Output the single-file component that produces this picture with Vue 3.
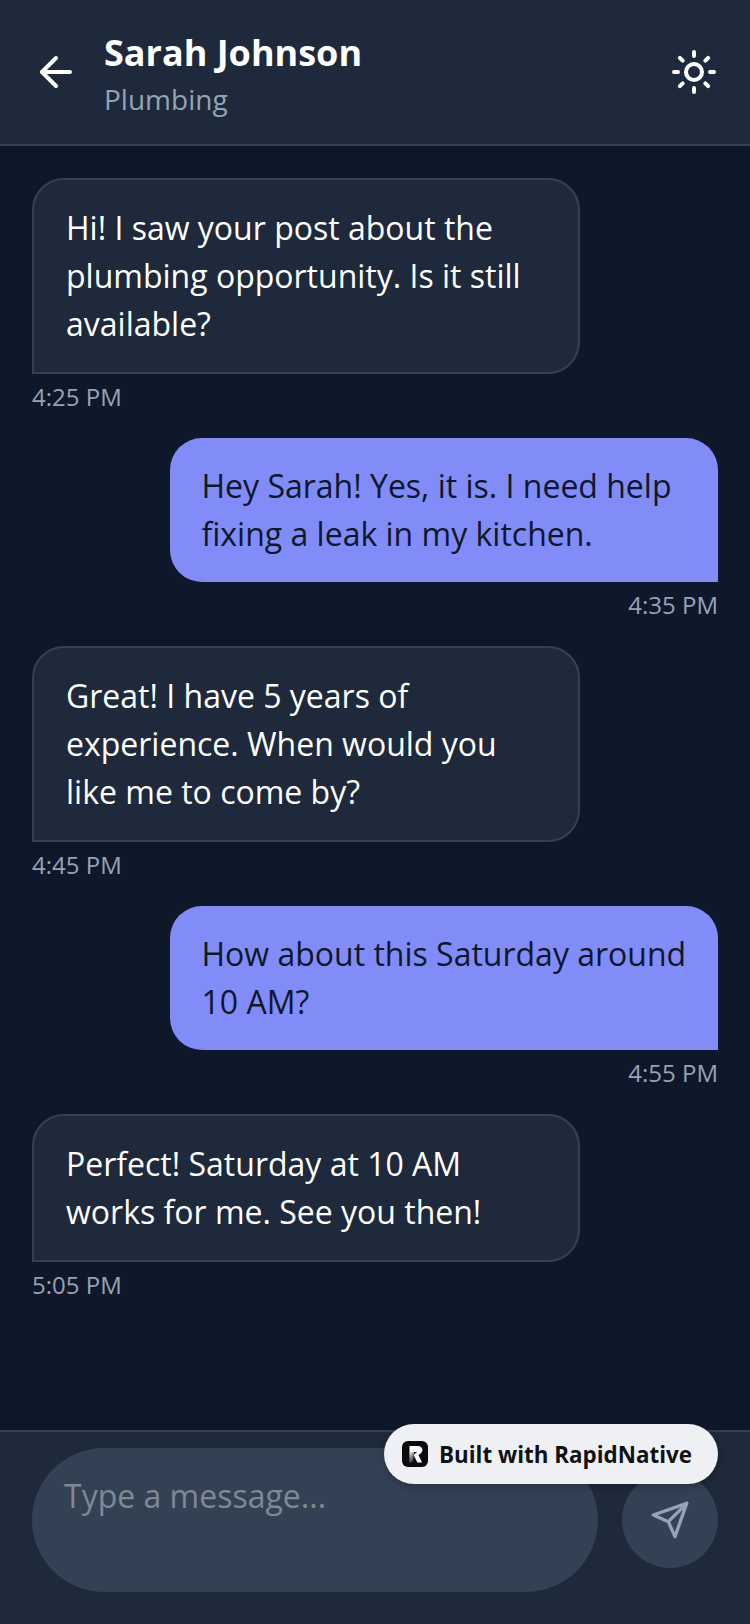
<template>
  <div class="chat">
    <header class="topbar">
      <svg class="icon back" viewBox="0 0 24 24" fill="none" stroke="#fff" stroke-width="2" stroke-linecap="round" stroke-linejoin="round">
        <path d="m12 19-7-7 7-7" />
        <path d="M19 12H5" />
      </svg>
      <div class="who">
        <div class="name">Sarah Johnson</div>
        <div class="trade">Plumbing</div>
      </div>
      <svg class="icon" viewBox="0 0 24 24" fill="none" stroke="#fff" stroke-width="2" stroke-linecap="round" stroke-linejoin="round">
        <circle cx="12" cy="12" r="4" />
        <path d="M12 2v2M12 20v2M4.93 4.93l1.41 1.41M17.66 17.66l1.41 1.41M2 12h2M20 12h2M6.34 17.66l-1.41 1.41M19.07 4.93l-1.41 1.41" />
      </svg>
    </header>

    <main class="messages">
      <div v-for="m in messages" :key="m.time" class="msg" :class="m.mine ? 'mine' : 'theirs'">
        <div class="bubble">{{ m.text }}</div>
        <div class="time">{{ m.time }}</div>
      </div>
    </main>

    <footer class="composer">
      <div class="input">Type a message...</div>
      <div class="send">
        <svg class="send-icon" viewBox="0 0 24 24" fill="none" stroke="#94a3b8" stroke-width="2" stroke-linecap="round" stroke-linejoin="round">
          <path d="m22 2-7 20-4-9-9-4Z" />
          <path d="M22 2 11 13" />
        </svg>
      </div>
    </footer>

    <div class="badge">
      <svg class="logo" viewBox="0 0 26 26">
        <defs>
          <linearGradient id="stem" x1="0" y1="0" x2="0.6" y2="1">
            <stop offset="0" stop-color="#fff" />
            <stop offset="1" stop-color="#1c1c1e" />
          </linearGradient>
        </defs>
        <rect width="26" height="26" rx="6" fill="#0b0b0d" />
        <path d="M7.500 5h9a4 4 0 0 1 2.400 7.200L16.500 14l3.500 7.500h-4.600L11.500 14l3.600-3H7.500Z" fill="#fff" />
        <path d="M7.500 11h5L11.500 14v7.500h-4Z" fill="url(#stem)" />
      </svg>
      <span>Built with RapidNative</span>
    </div>
  </div>
</template>

<script setup>
const messages = [
  { text: "Hi! I saw your post about the plumbing opportunity. Is it still available?", time: "4:25 PM" },
  { text: "Hey Sarah! Yes, it is. I need help fixing a leak in my kitchen.", time: "4:35 PM", mine: true },
  { text: "Great! I have 5 years of experience. When would you like me to come by?", time: "4:45 PM" },
  { text: "How about this Saturday around 10 AM?", time: "4:55 PM", mine: true },
  { text: "Perfect! Saturday at 10 AM works for me. See you then!", time: "5:05 PM" },
];
</script>

<style>
body {
  background: #0f172a;
}
</style>

<style scoped>
.chat {
  position: relative;
  width: 750px;
  height: 1624px;
  display: flex;
  flex-direction: column;
  background: #0f172a;
  font-family: "Open Sans", sans-serif;
  overflow: hidden;
}
.topbar {
  height: 146px;
  box-sizing: border-box;
  padding: 0 32px;
  display: flex;
  align-items: center;
  gap: 24px;
  background: #1e293b;
  border-bottom: 2px solid #334155;
}
.icon {
  width: 48px;
  height: 48px;
  flex: none;
}
.who {
  flex: 1;
}
.name {
  font-size: 36px;
  line-height: 56px;
  font-weight: 700;
  color: #fff;
}
.trade {
  margin-top: -2px;
  font-size: 28px;
  line-height: 40px;
  color: #94a3b8;
}
.messages {
  flex: 1;
  padding: 32px;
  display: flex;
  flex-direction: column;
  gap: 26px;
}
.msg {
  display: flex;
  flex-direction: column;
}
.mine {
  align-items: flex-end;
}
.theirs {
  align-items: flex-start;
}
.bubble {
  box-sizing: border-box;
  width: 548px;
  font-size: 32px;
  line-height: 48px;
  padding: 24px 30px 24px 32px;
}
.theirs .bubble {
  background: #1e293b;
  border: 2px solid #334155;
  color: #fff;
  border-radius: 32px 32px 32px 0;
}
.mine .bubble {
  padding-left: 31.5px;
  background: #818cf8;
  color: #0f172a;
  border-radius: 32px 32px 0 32px;
}
.time {
  margin-top: 8px;
  font-size: 24px;
  line-height: 30px;
  color: #94a3b8;
}
.composer {
  box-sizing: border-box;
  height: 194px;
  padding: 16px 32px 32px;
  display: flex;
  align-items: center;
  gap: 24px;
  background: #1e293b;
  border-top: 2px solid #334155;
}
.input {
  flex: 1;
  height: 144px;
  box-sizing: border-box;
  padding: 24px 32px;
  border-radius: 72px;
  background: #334155;
  color: #7f8894;
  font-size: 32px;
  line-height: 48px;
}
.send {
  width: 96px;
  height: 96px;
  flex: none;
  border-radius: 50%;
  background: #334155;
  display: flex;
  align-items: center;
  justify-content: center;
}
.send-icon {
  width: 40px;
  height: 40px;
}
.badge {
  position: absolute;
  left: 384px;
  top: 1424px;
  width: 334px;
  height: 60px;
  box-sizing: border-box;
  padding-left: 18px;
  display: flex;
  align-items: center;
  gap: 11px;
  border-radius: 30px;
  background: #eff0f4;
  box-shadow: 0 2px 8px rgba(0, 0, 0, 0.25);
  color: #101114;
  font-size: 22.4px;
  font-weight: 700;
}
.logo {
  width: 26px;
  height: 26px;
  flex: none;
}
</style>
